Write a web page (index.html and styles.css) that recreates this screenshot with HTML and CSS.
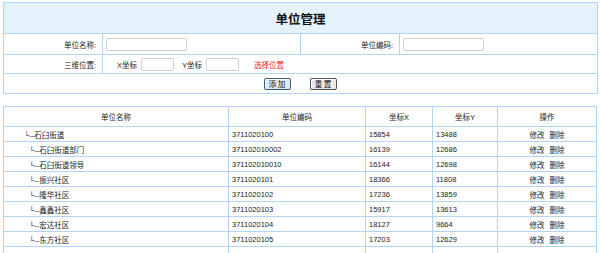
FILE: index.html
```html
<!DOCTYPE html>
<html lang="zh-CN">
<head>
    <meta charset="UTF-8">
    <title>单位管理</title>
    <link rel="stylesheet" href="styles.css">
</head>
<body>
    <div class="page">
        <table class="form-table">
            <colgroup>
                <col class="c-label">
                <col class="c-field">
                <col class="c-label">
                <col class="c-field">
            </colgroup>
            <tr class="title-row">
                <td colspan="4">单位管理</td>
            </tr>
            <tr class="row-name">
                <td class="label">单位名称:</td>
                <td><input type="text" class="txt"></td>
                <td class="label">单位编码:</td>
                <td><input type="text" class="txt"></td>
            </tr>
            <tr class="row-pos">
                <td class="label">三维位置:</td>
                <td colspan="3">
                    <div class="pos">
                        <span>X坐标</span>
                        <input type="text" class="txt small">
                        <span class="gap">Y坐标</span>
                        <input type="text" class="txt small">
                        <a href="#" class="pick">选择位置</a>
                    </div>
                </td>
            </tr>
            <tr class="row-btn">
                <td colspan="4">
                    <div class="btns">
                        <button class="btn btn-add">添 加</button>
                        <button class="btn">重 置</button>
                    </div>
                </td>
            </tr>
        </table>

        <table class="list-table">
            <colgroup>
                <col class="l-name">
                <col class="l-code">
                <col class="l-x">
                <col class="l-y">
                <col class="l-op">
            </colgroup>
            <tr class="head">
                <td>单位名称</td>
                <td>单位编码</td>
                <td>坐标X</td>
                <td>坐标Y</td>
                <td>操作</td>
            </tr>
            <tr>
                <td class="lv1">└--石臼街道</td>
                <td>3711020100</td>
                <td>15854</td>
                <td>13488</td>
                <td class="op"><a href="#">修改</a><a href="#">删除</a></td>
            </tr>
            <tr>
                <td class="lv2">└--石臼街道部门</td>
                <td>371102010002</td>
                <td>16139</td>
                <td>12686</td>
                <td class="op"><a href="#">修改</a><a href="#">删除</a></td>
            </tr>
            <tr>
                <td class="lv2">└--石臼街道领导</td>
                <td>371102010010</td>
                <td>16144</td>
                <td>12698</td>
                <td class="op"><a href="#">修改</a><a href="#">删除</a></td>
            </tr>
            <tr>
                <td class="lv2">└--振兴社区</td>
                <td>3711020101</td>
                <td>18366</td>
                <td>11808</td>
                <td class="op"><a href="#">修改</a><a href="#">删除</a></td>
            </tr>
            <tr>
                <td class="lv2">└--隆华社区</td>
                <td>3711020102</td>
                <td>17236</td>
                <td>13859</td>
                <td class="op"><a href="#">修改</a><a href="#">删除</a></td>
            </tr>
            <tr>
                <td class="lv2">└--鑫鑫社区</td>
                <td>3711020103</td>
                <td>15917</td>
                <td>13613</td>
                <td class="op"><a href="#">修改</a><a href="#">删除</a></td>
            </tr>
            <tr>
                <td class="lv2">└--宏达社区</td>
                <td>3711020104</td>
                <td>18127</td>
                <td>9664</td>
                <td class="op"><a href="#">修改</a><a href="#">删除</a></td>
            </tr>
            <tr>
                <td class="lv2">└--东方社区</td>
                <td>3711020105</td>
                <td>17203</td>
                <td>12629</td>
                <td class="op"><a href="#">修改</a><a href="#">删除</a></td>
            </tr>
            <tr class="empty">
                <td></td>
                <td></td>
                <td></td>
                <td></td>
                <td></td>
            </tr>
        </table>
    </div>
</body>
</html>
```

FILE: styles.css
```css
* {
    margin: 0;
    padding: 0;
    box-sizing: border-box;
}

body {
    background: #ffffff;
    color: #222222;
    font-family: "Liberation Sans", "Noto Sans CJK SC", sans-serif;
    font-size: 7.5px;
}

.page {
    padding: 2px 3px 0 3px;
}

table {
    border-collapse: collapse;
    table-layout: fixed;
}

td {
    border: 1px solid #b3d5f5;
}

/* formulario superior */
.form-table {
    width: 594px;
}

.c-label {
    width: 99px;
}

.c-field {
    width: 198px;
}

.title-row td {
    height: 31px;
    background: #e4f2fc;
    text-align: center;
    font-family: "Noto Sans CJK SC", sans-serif;
    font-size: 12.5px;
    font-weight: bold;
    color: #111111;
}

.row-name td {
    height: 21px;
}

.row-pos td {
    height: 19px;
}

.row-btn td {
    height: 20px;
}

.label {
    text-align: right;
    padding-right: 6px;
}

.row-name td:nth-child(2),
.row-name td:nth-child(4) {
    padding-left: 3px;
}

.txt {
    display: block;
    width: 81px;
    height: 13px;
    border: 1px solid #cfcfcf;
    border-radius: 2px;
    background: #fff;
}

.pos {
    display: flex;
    align-items: center;
    padding-left: 14px;
}

.pos .txt.small {
    width: 33px;
    margin-left: 4px;
}

.pos .gap {
    margin-left: 8px;
}

.pick {
    color: #ff2020;
    text-decoration: none;
    margin-left: 15px;
}

.btns {
    display: flex;
    justify-content: center;
    gap: 19px;
    padding-right: 1px;
}

.btn {
    width: 27px;
    height: 12px;
    font-family: "Noto Sans CJK SC", sans-serif;
    font-size: 7.5px;
    line-height: 10px;
    color: #111;
    background: #e9e9e9;
    border: 1px solid #555;
    border-radius: 2px;
    box-shadow: inset 1px 1px 0 #fff;
}

.btn-add {
    background: #dbeaf5;
    border-color: #3d5a73;
}

/* lista */
.list-table {
    width: 593px;
    margin-top: 12px;
}

.l-name {
    width: 225px;
}

.l-code {
    width: 137px;
}

.l-x {
    width: 67px;
}

.l-y {
    width: 65px;
}

.l-op {
    width: 99px;
}

.list-table td {
    height: 15px;
    padding-left: 3px;
    white-space: nowrap;
}

.list-table .head td {
    height: 20px;
    text-align: center;
    padding-left: 0;
}

.list-table td.lv1 {
    padding-left: 20px;
}

.list-table td.lv2 {
    padding-left: 25px;
}

.list-table td.op {
    text-align: center;
    padding-left: 0;
}

.op a {
    color: #222;
    text-decoration: none;
}

.op a + a {
    margin-left: 5px;
}
```
